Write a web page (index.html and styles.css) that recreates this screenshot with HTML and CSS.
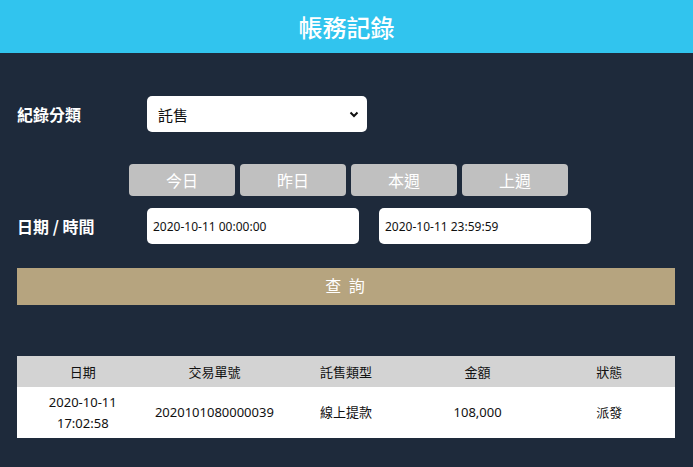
FILE: index.html
```html
<!DOCTYPE html>
<html>
    <head>
        <meta charset="utf-8">
        <title>帳務記錄</title>
        <link rel="stylesheet" href="styles.css">
    </head>
    <body>
        <header class="top-bar">
            <h1>帳務記錄</h1>
        </header>
        <main class="content">
            <div class="form-row">
                <label class="label">紀錄分類</label>
                <div class="select-box">
                    <span>託售</span>
                    <svg width="10" height="7" viewBox="0 0 10 7"><path d="M1.5 1.5 L5 5 L8.5 1.5" fill="none" stroke="#111" stroke-width="2"/></svg>
                </div>
            </div>
            <div class="quick-row">
                <button class="quick">今日</button>
                <button class="quick">昨日</button>
                <button class="quick">本週</button>
                <button class="quick">上週</button>
            </div>
            <div class="form-row date-row">
                <label class="label">日期 / 時間</label>
                <div class="date-input">2020-10-11 00:00:00</div>
                <div class="date-input">2020-10-11 23:59:59</div>
            </div>
            <button class="search">查 詢</button>
            <table class="records">
                <thead>
                    <tr>
                        <th>日期</th>
                        <th>交易單號</th>
                        <th>託售類型</th>
                        <th>金額</th>
                        <th>狀態</th>
                    </tr>
                </thead>
                <tbody>
                    <tr>
                        <td>2020-10-11<br>17:02:58</td>
                        <td>2020101080000039</td>
                        <td>線上提款</td>
                        <td>108,000</td>
                        <td>派發</td>
                    </tr>
                </tbody>
            </table>
        </main>
    </body>
</html>
```

FILE: styles.css
```css
body{
    margin: 0;
    background-color: #1e2a3b;
    font-family: "Noto Sans", "Noto Sans CJK TC", sans-serif;
    height: 467px;
    overflow: hidden;
}
.top-bar{
    background-color: #31c4ee;
    height: 53px;

    display: flex;
    align-items: center;
    justify-content: center;
}
.top-bar h1{
    margin: 0;
    color: white;
    font-size: 24px;
    font-weight: 500;
    font-family: "Noto Sans CJK TC", sans-serif;
}
.content{
    padding: 43px 18px 0 17px;
}
.form-row{
    display: flex;
    flex-direction: row;
    align-items: center;
}
.label{
    width: 130px;
    color: white;
    font-size: 16px;
    font-weight: bold;
    font-family: "Noto Sans CJK TC", sans-serif;
}
.select-box{
    width: 220px;
    height: 36px;
    box-sizing: border-box;
    background-color: white;
    border-radius: 5px;
    padding: 0 8px 0 11px;

    display: flex;
    align-items: center;
    justify-content: space-between;

    font-size: 15px;
    color: #111;
    font-family: "Noto Sans CJK TC", sans-serif;
}
.quick-row{
    display: flex;
    flex-direction: row;
    gap: 5px;
    padding-left: 112px;
    margin-top: 32px;
}
.quick{
    width: 106px;
    height: 32px;
    border: none;
    border-radius: 4px;
    background-color: #c0c0c0;
    color: white;
    font-size: 16px;
    font-family: "Noto Sans CJK TC", sans-serif;
    padding: 0;
}
.date-row{
    margin-top: 12px;
}
.date-input{
    width: 212px;
    height: 36px;
    box-sizing: border-box;
    background-color: white;
    border-radius: 5px;
    padding-left: 6px;
    margin-right: 20px;

    display: flex;
    align-items: center;

    font-size: 12px;
    color: #111;
}
.search{
    display: block;
    width: 100%;
    height: 37px;
    margin-top: 24px;
    border: none;
    background-color: #b6a47f;
    color: white;
    font-size: 16px;
    letter-spacing: 2px;
    padding: 0 0 4px;
    font-family: "Noto Sans CJK TC", sans-serif;
}
.records{
    width: 100%;
    margin-top: 51px;
    border-collapse: collapse;
    table-layout: fixed;
    font-size: 13px;
    color: #111;
}
.records th{
    background-color: #d3d3d3;
    height: 31px;
    font-weight: 400;
    padding: 0;
}
.records td{
    background-color: white;
    height: 51px;
    text-align: center;
    line-height: 21px;
    padding: 0;
}
```
